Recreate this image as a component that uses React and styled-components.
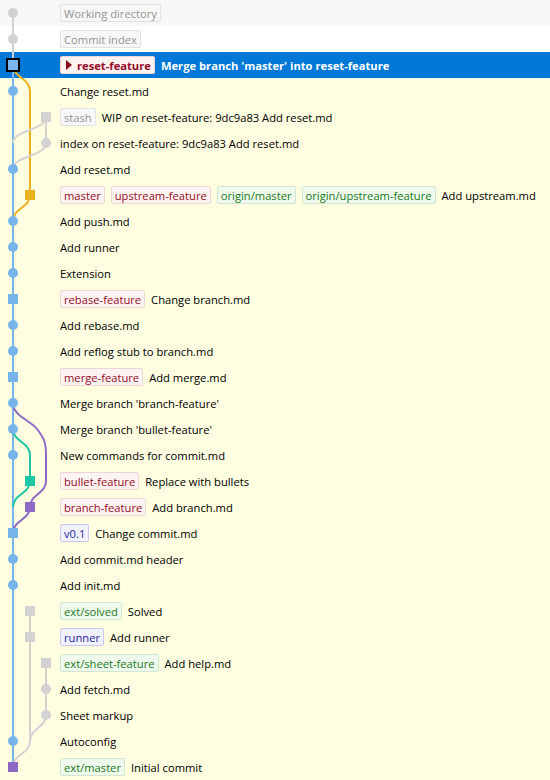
import React from "react";
import styled, { createGlobalStyle } from "styled-components";

const ROW = 26;
const LANE = [13, 30, 46];

const COLORS = {
  grey: "#d2d2d2",
  blue: "#76b4ea",
  orange: "#e9b11b",
  teal: "#1dc6a4",
  purple: "#8d68c4",
};

const y = (r) => r * ROW + ROW / 2;

// curve from (x1, y1) to (x2, y2) as a soft S
const curve = (x1, y1, x2, y2) => {
  const m = (y1 + y2) / 2;
  return `M${x1} ${y1} C${x1} ${m} ${x2} ${m} ${x2} ${y2}`;
};

const EDGES = [
  { c: "grey", d: `M${LANE[0]} ${y(0)} L${LANE[0]} ${y(2)}` },
  { c: "blue", d: `M${LANE[0]} ${y(2)} L${LANE[0]} ${y(29)}` },
  { c: "orange", d: `${curve(LANE[0], y(2), LANE[1], y(3))} L${LANE[1]} ${y(7)}` },
  { c: "orange", d: curve(LANE[1], y(7), LANE[0], y(8)) },
  { c: "grey", d: `M${LANE[2]} ${y(4)} L${LANE[2]} ${y(5)}` },
  { c: "grey", d: curve(LANE[2], y(4), LANE[0], y(5)) },
  { c: "grey", d: curve(LANE[2], y(5), LANE[0], y(6)) },
  {
    c: "purple",
    d: `M13 ${y(15)} C13 ${y(15) + 13} 30 ${y(16) - 9} 37 ${y(16)} C44 ${y(16) + 9} 46 ${y(17) - 13} 46 ${y(17)} L46 ${y(18)}`,
  },
  { c: "purple", d: curve(LANE[2], y(18), LANE[1], y(19)) },
  { c: "purple", d: curve(LANE[1], y(19), LANE[0], y(20)) },
  { c: "teal", d: `${curve(LANE[0], y(16), LANE[1], y(17))} L${LANE[1]} ${y(18)}` },
  { c: "teal", d: curve(LANE[1], y(18), LANE[0], y(19)) },
  { c: "grey", d: `M${LANE[1]} ${y(23)} L${LANE[1]} ${y(28)}` },
  { c: "grey", d: curve(LANE[1], y(28), LANE[0], y(29)) },
  { c: "grey", d: `M${LANE[2]} ${y(25)} L${LANE[2]} ${y(27)}` },
  { c: "grey", d: curve(LANE[2], y(27), LANE[1], y(28)) },
];

const ROWS = [
  { lane: 0, node: "dot", c: "grey", bg: "wd", refs: [{ t: "Working directory", k: "plain" }] },
  { lane: 0, node: "dot", c: "grey", bg: "index", refs: [{ t: "Commit index", k: "plain" }] },
  { lane: 0, node: "head", c: "blue", bg: "selected", refs: [{ t: "reset-feature", k: "head" }], msg: "Merge branch 'master' into reset-feature" },
  { lane: 0, node: "dot", c: "blue", msg: "Change reset.md" },
  { lane: 2, node: "box", c: "grey", refs: [{ t: "stash", k: "plain" }], msg: "WIP on reset-feature: 9dc9a83 Add reset.md" },
  { lane: 2, node: "dot", c: "grey", msg: "index on reset-feature: 9dc9a83 Add reset.md" },
  { lane: 0, node: "dot", c: "blue", msg: "Add reset.md" },
  {
    lane: 1,
    node: "box",
    c: "orange",
    refs: [
      { t: "master", k: "branch" },
      { t: "upstream-feature", k: "branch" },
      { t: "origin/master", k: "remote" },
      { t: "origin/upstream-feature", k: "remote" },
    ],
    msg: "Add upstream.md",
  },
  { lane: 0, node: "dot", c: "blue", msg: "Add push.md" },
  { lane: 0, node: "dot", c: "blue", msg: "Add runner" },
  { lane: 0, node: "dot", c: "blue", msg: "Extension" },
  { lane: 0, node: "box", c: "blue", refs: [{ t: "rebase-feature", k: "branch" }], msg: "Change branch.md" },
  { lane: 0, node: "dot", c: "blue", msg: "Add rebase.md" },
  { lane: 0, node: "dot", c: "blue", msg: "Add reflog stub to branch.md" },
  { lane: 0, node: "box", c: "blue", refs: [{ t: "merge-feature", k: "branch" }], msg: "Add merge.md" },
  { lane: 0, node: "dot", c: "blue", msg: "Merge branch 'branch-feature'" },
  { lane: 0, node: "dot", c: "blue", msg: "Merge branch 'bullet-feature'" },
  { lane: 0, node: "dot", c: "blue", msg: "New commands for commit.md" },
  { lane: 1, node: "box", c: "teal", refs: [{ t: "bullet-feature", k: "branch" }], msg: "Replace with bullets" },
  { lane: 1, node: "box", c: "purple", refs: [{ t: "branch-feature", k: "branch" }], msg: "Add branch.md" },
  { lane: 0, node: "box", c: "blue", refs: [{ t: "v0.1", k: "tag" }], msg: "Change commit.md" },
  { lane: 0, node: "dot", c: "blue", msg: "Add commit.md header" },
  { lane: 0, node: "dot", c: "blue", msg: "Add init.md" },
  { lane: 1, node: "box", c: "grey", refs: [{ t: "ext/solved", k: "remote" }], msg: "Solved" },
  { lane: 1, node: "box", c: "grey", refs: [{ t: "runner", k: "tag" }], msg: "Add runner" },
  { lane: 2, node: "box", c: "grey", refs: [{ t: "ext/sheet-feature", k: "remote" }], msg: "Add help.md" },
  { lane: 2, node: "dot", c: "grey", msg: "Add fetch.md" },
  { lane: 2, node: "dot", c: "grey", msg: "Sheet markup" },
  { lane: 0, node: "dot", c: "blue", msg: "Autoconfig" },
  { lane: 0, node: "box", c: "purple", refs: [{ t: "ext/master", k: "remote" }], msg: "Initial commit" },
];

const GlobalStyle = createGlobalStyle`
  html, body {
    margin: 0;
    padding: 0;
    background: #fffee0;
  }
  body {
    font-family: "Open Sans", "Noto Sans", "DejaVu Sans", sans-serif;
    font-size: 11.2px;
    color: #000;
  }
`;

const List = styled.div`
  display: flex;
  flex-direction: column;
  width: 550px;
`;

const ROW_BG = {
  wd: "#f7f7f7",
  index: "#ffffff",
  selected: "#0078d7",
  normal: "#fffee0",
};

const Row = styled.div`
  display: flex;
  align-items: center;
  height: ${ROW}px;
  background: ${(p) => ROW_BG[p.$bg] || ROW_BG.normal};
  color: ${(p) => (p.$bg === "selected" ? "#fff" : "#000")};
  font-weight: ${(p) => (p.$bg === "selected" ? 700 : 400)};
  white-space: nowrap;
  overflow: hidden;
`;

const GraphCell = styled.svg`
  flex: 0 0 60px;
  width: 60px;
  height: ${ROW}px;
  display: block;
`;

const Content = styled.div`
  display: flex;
  align-items: center;
  gap: 6px;
`;

const BADGE = {
  plain: { bg: "#f7f7f7", border: "#e2e2e2", color: "#959595" },
  branch: { bg: "#fdf3f1", border: "#eed6d6", color: "#960c28" },
  head: { bg: "#fdf3f1", border: "#eed6d6", color: "#960c28" },
  remote: { bg: "#f0f9ee", border: "#cfe7cf", color: "#187a18" },
  tag: { bg: "#f1f1ff", border: "#c9c9f0", color: "#1f1f9c" },
};

const Badge = styled.span`
  display: inline-flex;
  align-items: center;
  gap: 5px;
  height: 16px;
  padding: 0 3px;
  border: 1px solid ${(p) => BADGE[p.$kind].border};
  border-radius: 2px;
  background: ${(p) => BADGE[p.$kind].bg};
  color: ${(p) => BADGE[p.$kind].color};
  font-weight: ${(p) => (p.$kind === "head" ? 700 : 400)};
`;

const HeadMark = styled.span`
  width: 0;
  height: 0;
  margin-left: 2px;
  border-top: 5px solid transparent;
  border-bottom: 5px solid transparent;
  border-left: 6px solid #8c0a1e;
`;

const Node = ({ row, r }) => {
  const cx = LANE[row.lane];
  const cy = y(r);
  const fill = COLORS[row.c];
  if (row.node === "dot") return <circle cx={cx} cy={cy} r={5} fill={fill} />;
  if (row.node === "head")
    return <rect x={cx - 6} y={cy - 6} width={12} height={12} fill="#7ab6ec" stroke="#000" strokeWidth={2} />;
  return <rect x={cx - 5} y={cy - 5} width={10} height={10} fill={fill} />;
};

const Graph = ({ r, row }) => (
  <GraphCell viewBox={`0 ${r * ROW} 60 ${ROW}`}>
    {EDGES.map((e, i) => (
      <path key={i} d={e.d} fill="none" stroke={COLORS[e.c]} strokeWidth={2} />
    ))}
    <Node row={row} r={r} />
  </GraphCell>
);

export default function App() {
  return (
    <>
      <GlobalStyle />
      <List>
        {ROWS.map((row, r) => (
          <Row key={r} $bg={row.bg}>
            <Graph r={r} row={row} />
            <Content>
              {row.refs?.map((ref) => (
                <Badge key={ref.t} $kind={ref.k}>
                  {ref.k === "head" && <HeadMark />}
                  {ref.t}
                </Badge>
              ))}
              {row.msg && <span>{row.msg}</span>}
            </Content>
          </Row>
        ))}
      </List>
    </>
  );
}
